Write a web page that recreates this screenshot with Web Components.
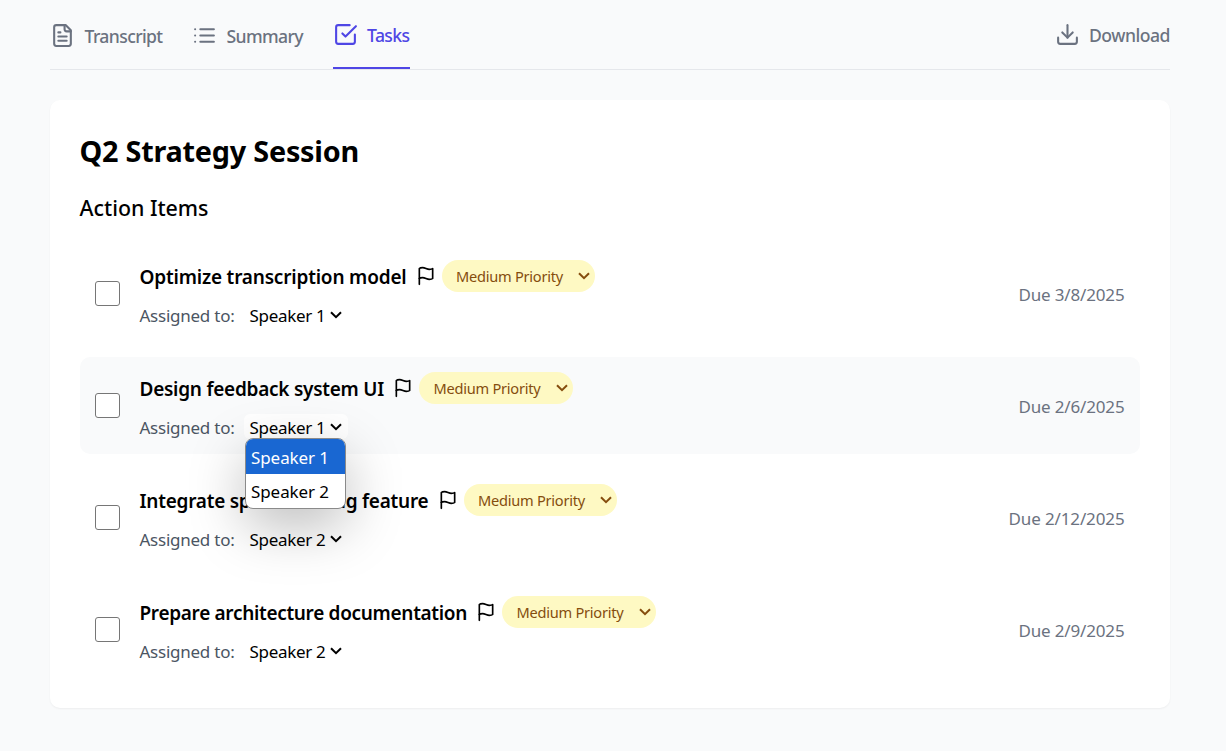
<!DOCTYPE html>
<html lang="en">
<head>
<meta charset="utf-8">
<title>Q2 Strategy Session</title>
<style>
body{margin:0;background:#f9fafb;color:#000;font-family:"Noto Sans","Open Sans",sans-serif;overflow:hidden}
</style>
</head>
<body>
<meeting-page></meeting-page>
<script>
const ICONS = {
  file: '<path d="M15 2H6a2 2 0 0 0-2 2v16a2 2 0 0 0 2 2h12a2 2 0 0 0 2-2V7Z"/><path d="M14 2v4a2 2 0 0 0 2 2h4"/><path d="M10 9H8"/><path d="M16 13H8"/><path d="M16 17H8"/>',
  list: '<path d="M8 6h13M8 12h13M8 18h13M3 6h.01M3 12h.01M3 18h.01"/>',
  check: '<path d="m9 11 3 3L22 4"/><path d="M21 12v7a2 2 0 0 1-2 2H5a2 2 0 0 1-2-2V5a2 2 0 0 1 2-2h11"/>',
  download: '<path d="M21 15v4a2 2 0 0 1-2 2H5a2 2 0 0 1-2-2v-4"/><path d="m7 10 5 5 5-5"/><path d="M12 15V3"/>',
  flag: '<path d="M4 15s1-1 4-1 5 2 8 2 4-1 4-1V3s-1 1-4 1-5-2-8-2-4 1-4 1z"/><path d="M4 22v-7"/>'
};
class Base extends HTMLElement {
  connectedCallback() {
    if (this.shadowRoot) return;
    this.attachShadow({mode: 'open'}).innerHTML = this.view();
    this.ready && this.ready();
  }
  a(n) { return this.getAttribute(n); }
}
/* Inline label whose tracking is adjusted to a given width. */
customElements.define('fit-text', class extends Base {
  view() { return '<style>:host{display:block;flex:none;white-space:nowrap}span{display:inline-block}</style><span><slot></slot></span>'; }
  ready() {
    const w = +this.a('w'), n = this.textContent.length;
    const natural = this.shadowRoot.querySelector('span').getBoundingClientRect().width;
    this.style.letterSpacing = ((w - natural) / n).toFixed(4) + 'px';
    this.style.width = w + 'px';
  }
});
customElements.define('line-icon', class extends Base {
  view() { const s = this.a('size') || 25;
    return `<style>:host{display:block;flex:none;width:${s}px;height:${s}px}svg{display:block}</style>
    <svg width="${s}" height="${s}" viewBox="0 0 24 24" fill="none" stroke="currentColor" stroke-width="2" stroke-linecap="round" stroke-linejoin="round">${ICONS[this.a('name')]}</svg>`; }
});
customElements.define('chevron-icon', class extends Base {
  view() { return `<style>:host{display:block;flex:none;width:12px;height:8px}svg{display:block}</style>
    <svg width="12" height="8" viewBox="0 0 12 8" fill="none" stroke="currentColor" stroke-width="2"><path d="M1 1.2 6 6.2 11 1.2"/></svg>`; }
});
customElements.define('nav-tab', class extends Base {
  view() { return `<style>:host{display:flex;gap:9.5px;align-items:center;box-sizing:border-box;height:69px;color:#6b7280;font-size:17.6px;font-weight:500;line-height:24px;padding-top:2px}
    :host([active]){color:#4f46e5;border-bottom:2px solid #4f46e5}
    :host([plain]){padding-top:0}</style>
    <line-icon name="${this.a('icon')}"></line-icon><fit-text w="${this.a('w')}">${this.a('label')}</fit-text>`; }
});
customElements.define('nav-bar', class extends Base {
  view() { return `<style>:host{display:flex;justify-content:space-between;height:69px;border-bottom:1px solid #e5e7eb}div{display:flex;gap:29.5px}</style>
    <div><nav-tab icon="file" label="Transcript" w="78"></nav-tab><nav-tab icon="list" label="Summary" w="76.5"></nav-tab><nav-tab icon="check" label="Tasks" w="42.5" active></nav-tab></div>
    <nav-tab icon="download" label="Download" w="81" plain></nav-tab>`; }
});
customElements.define('priority-pill', class extends Base {
  view() { return `<style>:host{display:flex;flex:none;align-items:center;box-sizing:border-box;width:153.5px;height:32px;padding:0 5px 0 14.5px;border-radius:16px;background:#fef9c3;color:#854d0e;font-size:14.6px;line-height:20px;justify-content:space-between}</style>
    <fit-text w="107">Medium Priority</fit-text><chevron-icon></chevron-icon>`; }
});
customElements.define('options-menu', class extends Base {
  view() { return `<style>:host{display:block;box-sizing:border-box;width:101px;height:71px;border:1px solid #8a8a8a;border-radius:8px;background:#fff;overflow:hidden;font-size:17px;line-height:37px;box-shadow:0 18px 55px rgba(0,0,0,.26)}
    div{height:35px;padding-left:5px}.on{background:#1967d2;color:#fff}.on+div{line-height:36px}</style>
    <div class="on"><fit-text w="78">Speaker 1</fit-text></div><div><fit-text w="78">Speaker 2</fit-text></div>`; }
});
customElements.define('speaker-select', class extends Base {
  view() { return `<style>:host{display:flex;position:relative;align-items:center;box-sizing:border-box;width:104px;height:25px;padding:0 5px 0 6px;gap:4px;border-radius:6px;background:#fff;font-size:17px;line-height:24px}
    fit-text{padding-top:2px}
    options-menu{position:absolute;left:1.5px;top:24px;z-index:5}</style>
    <fit-text w="76">Speaker ${this.a('n')}</fit-text><chevron-icon></chevron-icon>${this.hasAttribute('open') ? '<options-menu></options-menu>' : ''}`; }
});
customElements.define('task-row', class extends Base {
  view() { return `<style>:host{display:flex;align-items:center;box-sizing:border-box;height:97px;padding:0 15px;border-radius:10px}
    :host([hover]){background:#f9fafb}
    .box{flex:none;box-sizing:border-box;width:25px;height:25px;border:1px solid #767676;border-radius:3px;background:#fff}
    .main{flex:1;margin-left:19.5px;height:97px;display:flex;flex-direction:column;box-sizing:border-box;padding-top:15px}
    .top{display:flex;align-items:center;height:32px}
    .name{font-size:19px;font-weight:600;line-height:28px;padding-top:2px}
    line-icon{margin:0 6px 0 9px}
    .who{display:flex;align-items:center;height:25px;margin-top:10px;gap:9px;color:#4b5563;font-size:17px;line-height:24px}
    .who>fit-text{padding-top:2px}
    speaker-select{color:#000}
    .due{color:#6b7280;font-size:17px;line-height:24px;padding-top:2px;margin-right:.5px}</style>
    <div class="box"></div>
    <div class="main"><div class="top"><fit-text class="name" w="${this.a('w')}">${this.a('name')}</fit-text><line-icon name="flag" size="20"></line-icon><priority-pill></priority-pill></div>
    <div class="who"><fit-text w="95">Assigned to:</fit-text><speaker-select n="${this.a('n')}" ${this.hasAttribute('hover') ? 'open' : ''}></speaker-select></div></div>
    <fit-text class="due" w="${this.a('dw')}">Due ${this.a('due')}</fit-text>`; }
});
customElements.define('task-card', class extends Base {
  view() { return `<style>:host{display:block;box-sizing:border-box;height:608px;margin-top:30px;padding:30px 30px 30px 29.5px;background:#fff;border-radius:10px;box-shadow:0 1px 2px rgba(0,0,0,.05)}
    .h1{font-size:28.8px;font-weight:700;line-height:42px}.h2{font-size:21.4px;font-weight:500;line-height:34px;margin-top:19px}
    .rows{display:grid;gap:15px;margin:20px 0 0 .5px}</style>
    <fit-text class="h1" w="279.5">Q2 Strategy Session</fit-text>
    <fit-text class="h2" w="129">Action Items</fit-text>
    <div class="rows">
    <task-row name="Optimize transcription model" w="267" n="1" due="3/8/2025" dw="106"></task-row>
    <task-row name="Design feedback system UI" w="244.5" n="1" due="2/6/2025" dw="106" hover></task-row>
    <task-row name="Integrate spell checking feature" w="289" n="2" due="2/12/2025" dw="116"></task-row>
    <task-row name="Prepare architecture documentation" w="327.5" n="2" due="2/9/2025" dw="106"></task-row>
    </div>`; }
});
customElements.define('meeting-page', class extends Base {
  view() { return `<style>:host{display:block;box-sizing:border-box;width:1226px;height:751px;padding:0 56px 0 50px}</style><nav-bar></nav-bar><task-card></task-card>`; }
});
</script>
</body>
</html>
